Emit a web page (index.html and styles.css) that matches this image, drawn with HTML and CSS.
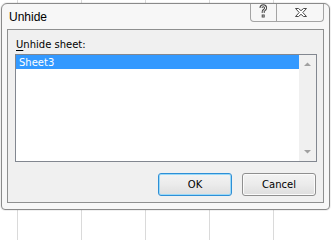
FILE: index.html
```html
<!DOCTYPE html>
<html>
<head>
<meta charset="utf-8">
<link rel="stylesheet" href="styles.css">
</head>
<body>
<div class="dialog">
  <div class="titlebar">
    <span class="title">Unhide</span>
    <div class="caption-btns">
      <div class="cbtn help">
        <svg width="25" height="17" viewBox="0 0 25 17">
          <path class="g-out" d="M10 4 Q10 1.8 12.3 1.8 Q14.6 1.8 14.6 4 Q14.6 5.5 12.9 6.3 Q12.2 6.8 12.2 7.8 V9"/>
          <path class="g-in" d="M10 4 Q10 1.8 12.3 1.8 Q14.6 1.8 14.6 4 Q14.6 5.5 12.9 6.3 Q12.2 6.8 12.2 7.8 V9"/>
          <rect x="11.2" y="11" width="2" height="2" fill="#fff" stroke="#4a4a4a" stroke-width="1"/>
        </svg>
      </div>
      <div class="cbtn close">
        <svg width="46" height="17" viewBox="0 0 46 17">
          <polygon class="x-glyph" points="18.5,4.5 21.5,4.5 24,6.7 26.5,4.5 29.5,4.5 25.8,8.5 29.5,12.5 26.5,12.5 24,10.3 21.5,12.5 18.5,12.5 22.2,8.5"/>
        </svg>
      </div>
    </div>
  </div>
  <div class="client">
    <div class="label"><u>U</u>nhide sheet:</div>
    <div class="listbox">
      <div class="items">
        <div class="item selected">Sheet3</div>
      </div>
      <div class="scrollbar">
        <div class="sb-btn">
          <svg width="17" height="17" viewBox="0 0 17 17"><polygon points="5,11 12,11 8.5,7.5" fill="#a0a0a0"/></svg>
        </div>
        <div class="sb-track"></div>
        <div class="sb-btn">
          <svg width="17" height="17" viewBox="0 0 17 17"><polygon points="5,6 12,6 8.5,9.5" fill="#a0a0a0"/></svg>
        </div>
      </div>
    </div>
    <div class="buttons">
      <button class="btn default">OK</button>
      <button class="btn">Cancel</button>
    </div>
  </div>
</div>
</body>
</html>
```

FILE: styles.css
```css
html, body {
  margin: 0;
  padding: 0;
  width: 332px;
  height: 212px;
  overflow: hidden;
}

body {
  background-color: #ffffff;
  background-image: linear-gradient(to right, #dadada 1px, transparent 1px);
  background-size: 64px 100%;
  background-position: 17px 0;
  font-family: "DejaVu Sans", sans-serif;
  font-size: 10px;
  color: #000;
}

.dialog {
  box-sizing: border-box;
  width: 329px;
  height: 207px;
  margin: 3px 0 0 1px;
  border: 1px solid #8a8a8a;
  border-radius: 6px 6px 4px 4px;
  background: #f7f7f7;
  padding: 0 5px 6px 5px;
  display: flex;
  flex-direction: column;
  box-shadow: 0 0 0 1px rgba(0, 0, 0, 0.06);
}

.titlebar {
  flex: none;
  height: 25px;
  display: flex;
  justify-content: space-between;
  align-items: flex-start;
}

.title {
  font-family: "Liberation Sans", sans-serif;
  font-size: 12px;
  line-height: 14px;
  margin: 6px 0 0 2px;
  color: #000;
}

.caption-btns {
  display: flex;
  height: 18px;
  box-sizing: border-box;
  border: 1px solid #a4a4a4;
  border-top: none;
  border-radius: 0 0 4px 4px;
  overflow: hidden;
}

.cbtn {
  height: 17px;
}

.cbtn svg {
  display: block;
}

.cbtn.help {
  width: 25px;
  border-right: 1px solid #a4a4a4;
}

.cbtn.close {
  width: 46px;
}

.g-out {
  fill: none;
  stroke: #4a4a4a;
  stroke-width: 3;
  stroke-linejoin: round;
}

.g-in {
  fill: none;
  stroke: #ffffff;
  stroke-width: 1;
  stroke-linejoin: round;
}

.x-glyph {
  fill: #ffffff;
  stroke: #4a4a4a;
  stroke-width: 1;
  stroke-linejoin: miter;
}

.client {
  flex: none;
  box-sizing: border-box;
  height: 174px;
  border: 1px solid #8e8f8f;
  background: #f0f0f0;
  padding: 9px 6px 6px 7px;
  display: flex;
  flex-direction: column;
}

.label {
  height: 12px;
  line-height: 12px;
  margin-left: 1px;
}

.label u {
  text-decoration-thickness: 1px;
  text-underline-offset: 2px;
}

.listbox {
  margin-top: 3px;
  height: 108px;
  box-sizing: border-box;
  border: 1px solid #828790;
  background: #ffffff;
  display: flex;
}

.items {
  flex: 1;
}

.item {
  height: 14px;
  box-sizing: border-box;
  padding: 2px 0 0 3px;
  line-height: 12px;
}

.item.selected {
  background: #3399ff;
  color: #ffffff;
}

.scrollbar {
  width: 17px;
  background: #f0f0f0;
  display: flex;
  flex-direction: column;
}

.sb-btn {
  height: 17px;
}

.sb-btn svg {
  display: block;
}

.sb-track {
  flex: 1;
}

.buttons {
  margin-top: 11px;
  margin-right: 1px;
  display: flex;
  justify-content: flex-end;
  gap: 10px;
}

.btn {
  width: 74px;
  height: 23px;
  box-sizing: border-box;
  padding: 0;
  font-family: "DejaVu Sans", sans-serif;
  font-size: 10px;
  color: #000;
  border: 1px solid #8f8f8f;
  border-radius: 3px;
  background: linear-gradient(#f3f3f3, #ebebeb 50%, #dedede);
  box-shadow: inset 0 0 0 1px #fbfbfb;
}

.btn.default {
  border-color: #2e8fd6;
  box-shadow: inset 0 0 0 1px #9ad9f8;
}
```
